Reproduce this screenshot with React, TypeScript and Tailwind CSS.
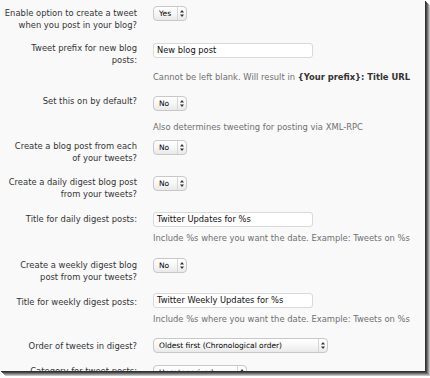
import type { ReactNode } from 'react'

const font = "font-['DejaVu_Sans','Verdana',sans-serif]"

function Arrows() {
  return (
    <svg width="4" height="7" viewBox="0 0 4 7" className="block">
      <path d="M2 0 L4 2.6 L0 2.6 Z" fill="#333" />
      <path d="M2 7 L4 4.4 L0 4.4 Z" fill="#333" />
    </svg>
  )
}

function Select({ value, className }: { value: string; className: string }) {
  return (
    <div
      className={`flex h-[15px] items-stretch rounded-[4px] border border-[#c8c8c8] bg-gradient-to-b from-white via-[#f7f7f7] to-[#e9e9e9] ${className}`}
    >
      <span className="flex-1 truncate pl-[5px] text-[7.5px] leading-[13px] text-[#000]">
        {value}
      </span>
      <span className="flex w-[9px] items-center justify-center border-l border-[#d6d6d6]">
        <Arrows />
      </span>
    </div>
  )
}

function Input({ value }: { value: string }) {
  return (
    <div className="h-[15px] w-[160px] rounded-[3px] border border-[#d9d9d9] bg-white pl-[3px] text-[8.3px] leading-[13px] text-[#111]">
      {value}
    </div>
  )
}

function Desc({ children, className }: { children: ReactNode; className: string }) {
  return <p className={`text-[8.4px] leading-[12px] text-[#6f6f6f] whitespace-nowrap ${className}`}>{children}</p>
}

function Row({
  label,
  className,
  labelClass,
  fieldClass,
  children,
}: {
  label: ReactNode
  className: string
  labelClass: string
  fieldClass: string
  children: ReactNode
}) {
  return (
    <div className={`flex items-start ${className}`}>
      <div className={`w-[137px] shrink-0 text-right text-[8.4px] leading-[12px] text-[#333] ${labelClass}`}>
        {label}
      </div>
      <div className={`ml-[16px] ${fieldClass}`}>{children}</div>
    </div>
  )
}

export default function App() {
  return (
    <div className={`h-[378px] w-[430px] overflow-hidden bg-white ${font}`}>
      <div className="h-[371px] w-[425px] overflow-hidden bg-[#f9f9f9] pt-[5.5px] shadow-[1px_1px_0_#2f2f2f,2px_2px_0_#4a4a4a,3px_3px_0_#707070,4px_4px_0_#9a9a9a,5px_5px_0_#c4c4c4]">
        <Row
          className="h-[36px]"
          labelClass="mt-[1px]"
          fieldClass=""
          label={<>Enable option to create a tweet<br />when you post in your blog?</>}
        >
          <Select value="Yes" className="w-[34px]" />
        </Row>

        <Row
          className="h-[53px]"
          labelClass=""
          fieldClass="mt-[1px]"
          label={<>Tweet prefix for new blog<br />posts:</>}
        >
          <Input value="New blog post" />
          <Desc className="mt-[13px]">
            Cannot be left blank. Will result in <b className="text-[#333]">{'{Your prefix}'}: Title URL</b>
          </Desc>
        </Row>

        <Row className="h-[45px]" labelClass="" fieldClass="mt-[1px]" label="Set this on by default?">
          <Select value="No" className="w-[34px]" />
          <Desc className="mt-[10.5px]">Also determines tweeting for posting via XML-RPC</Desc>
        </Row>

        <Row
          className="h-[36.5px]"
          labelClass=""
          fieldClass=""
          label={<>Create a blog post from each<br />of your tweets?</>}
        >
          <Select value="No" className="w-[34px]" />
        </Row>

        <Row
          className="h-[36px]"
          labelClass=""
          fieldClass=""
          label={<>Create a daily digest blog post<br />from your tweets?</>}
        >
          <Select value="No" className="w-[34px]" />
        </Row>

        <Row className="h-[46px]" labelClass="mt-[0.5px]" fieldClass="" label="Title for daily digest posts:">
          <Input value="Twitter Updates for %s" />
          <Desc className="mt-[5px]">Include %s where you want the date. Example: Tweets on %s</Desc>
        </Row>

        <Row
          className="h-[35px]"
          labelClass="mt-[0.5px]"
          fieldClass=""
          label={<>Create a weekly digest blog<br />post from your tweets?</>}
        >
          <Select value="No" className="w-[34px]" />
        </Row>

        <Row className="h-[45px]" labelClass="mt-[3px]" fieldClass="" label="Title for weekly digest posts:">
          <Input value="Twitter Weekly Updates for %s" />
          <Desc className="mt-[5px]">Include %s where you want the date. Example: Tweets on %s</Desc>
        </Row>

        <Row className="h-[26.5px]" labelClass="mt-[1.5px]" fieldClass="" label="Order of tweets in digest?">
          <Select value="Oldest first (Chronological order)" className="w-[175px]" />
        </Row>

        <Row className="h-[30px]" labelClass="" fieldClass="mt-[0.5px]" label="Category for tweet posts:">
          <Select value="Uncategorized" className="w-[94px]" />
        </Row>
      </div>
    </div>
  )
}
